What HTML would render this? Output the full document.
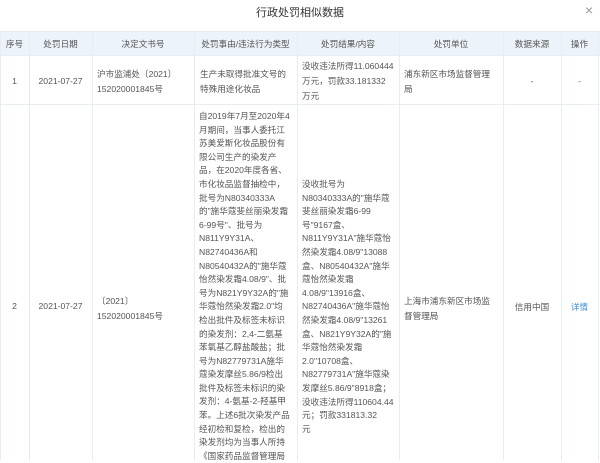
<!DOCTYPE html>
<html><head><meta charset="utf-8"><style>
body{margin:0;width:600px;height:461px;overflow:hidden;background:#fff;font-family:"Liberation Sans","Noto Sans CJK SC",sans-serif;color:#555;font-size:8.6px;position:relative}
.a{position:absolute;white-space:nowrap}
.v{position:absolute;top:31px;bottom:0;width:1px;background:#e8edf2}
.h{position:absolute;left:0;width:600px;height:1px;background:#e8edf2}
.lh{line-height:13.6px}
.l1{line-height:15px}
.c{text-align:center}
</style></head><body>
<div class="a" style="left:0;width:600px;top:4px;text-align:center;font-size:11px;color:#333">行政处罚相似数据</div>
<div class="a" style="left:585px;top:2px;font-size:14px;color:#999">×</div>
<div style="position:absolute;left:0;top:31px;width:600px;height:24px;background:#edf3fa"></div>
<div class="h" style="top:31px"></div><div class="h" style="top:55px"></div><div class="h" style="top:104px"></div>
<div class="v" style="left:0"></div><div class="v" style="left:29px"></div><div class="v" style="left:92px"></div><div class="v" style="left:194px"></div><div class="v" style="left:297px"></div><div class="v" style="left:399px"></div><div class="v" style="left:503px"></div><div class="v" style="left:561px"></div><div class="v" style="left:598px"></div>
<div class="a c" style="top:38px;left:0;width:29px">序号</div>
<div class="a c" style="top:38px;left:29px;width:63px">处罚日期</div>
<div class="a c" style="top:38px;left:92px;width:102px">决定文书号</div>
<div class="a c" style="top:38px;left:194px;width:103px">处罚事由/违法行为类型</div>
<div class="a c" style="top:38px;left:297px;width:102px">处罚结果/内容</div>
<div class="a c" style="top:38px;left:399px;width:104px">处罚单位</div>
<div class="a c" style="top:38px;left:503px;width:58px">数据来源</div>
<div class="a c" style="top:38px;left:561px;width:37px">操作</div>

<div class="a c" style="top:76px;left:0;width:29px">1</div>
<div class="a c" style="top:76px;left:29px;width:63px">2021-07-27</div>
<div class="a l1" style="top:67px;left:97px">沪市监浦处〔2021〕<br>152020001845号</div>
<div class="a l1" style="top:67px;left:200px">生产未取得批准文号的<br>特殊用途化妆品</div>
<div class="a l1" style="top:59px;left:302px">没收违法所得11.060444<br>万元，罚款33.181332<br>万元</div>
<div class="a l1" style="top:67px;left:404px">浦东新区市场监督管理<br>局</div>
<div class="a c" style="top:76px;left:503px;width:58px">-</div>
<div class="a c" style="top:76px;left:561px;width:37px">-</div>

<div class="a c" style="top:301px;left:0;width:29px">2</div>
<div class="a c" style="top:301px;left:29px;width:63px">2021-07-27</div>
<div class="a l1" style="top:294px;left:97px">〔2021〕<br>152020001845号</div>
<div class="a lh" style="top:110px;left:199px">自2019年7月至2020年4<br>月期间，当事人委托江<br>苏美爱斯化妆品股份有<br>限公司生产的染发产<br>品，在2020年度各省、<br>市化妆品监督抽检中，<br>批号为N80340333A<br>的"施华蔻斐丝丽染发霜<br>6-99号"、批号为<br>N811Y9Y31A、<br>N82740436A和<br>N80540432A的"施华蔻<br>怡然染发霜4.08/9"、批<br>号为N821Y9Y32A的"施<br>华蔻怡然染发霜2.0"均<br>检出批件及标签未标识<br>的染发剂：2,4-二氨基<br>苯氧基乙醇盐酸盐；批<br>号为N82779731A施华<br>蔻染发摩丝5.86/9检出<br>批件及标签未标识的染<br>发剂：4-氨基-2-羟基甲<br>苯。上述6批次染发产品<br>经初检和复检，检出的<br>染发剂均为当事人所持<br>《国家药品监督管理局</div>
<div class="a lh" style="top:178px;left:302px">没收批号为<br>N80340333A的"施华蔻<br>斐丝丽染发霜6-99<br>号"9167盒、<br>N811Y9Y31A"施华蔻怡<br>然染发霜4.08/9"13088<br>盒、N80540432A"施华<br>蔻怡然染发霜<br>4.08/9"13916盒、<br>N82740436A"施华蔻怡<br>然染发霜4.08/9"13261<br>盒、N821Y9Y32A的"施<br>华蔻怡然染发霜<br>2.0"10708盒、<br>N82779731A"施华蔻染<br>发摩丝5.86/9"8918盒；<br>没收违法所得110604.44<br>元；罚款331813.32<br>元</div>
<div class="a l1" style="top:294px;left:404px">上海市浦东新区市场监<br>督管理局</div>
<div class="a c" style="top:301px;left:503px;width:58px">信用中国</div>
<div class="a c" style="top:301px;left:561px;width:37px;color:#3f8fdc">详情</div>
</body></html>
